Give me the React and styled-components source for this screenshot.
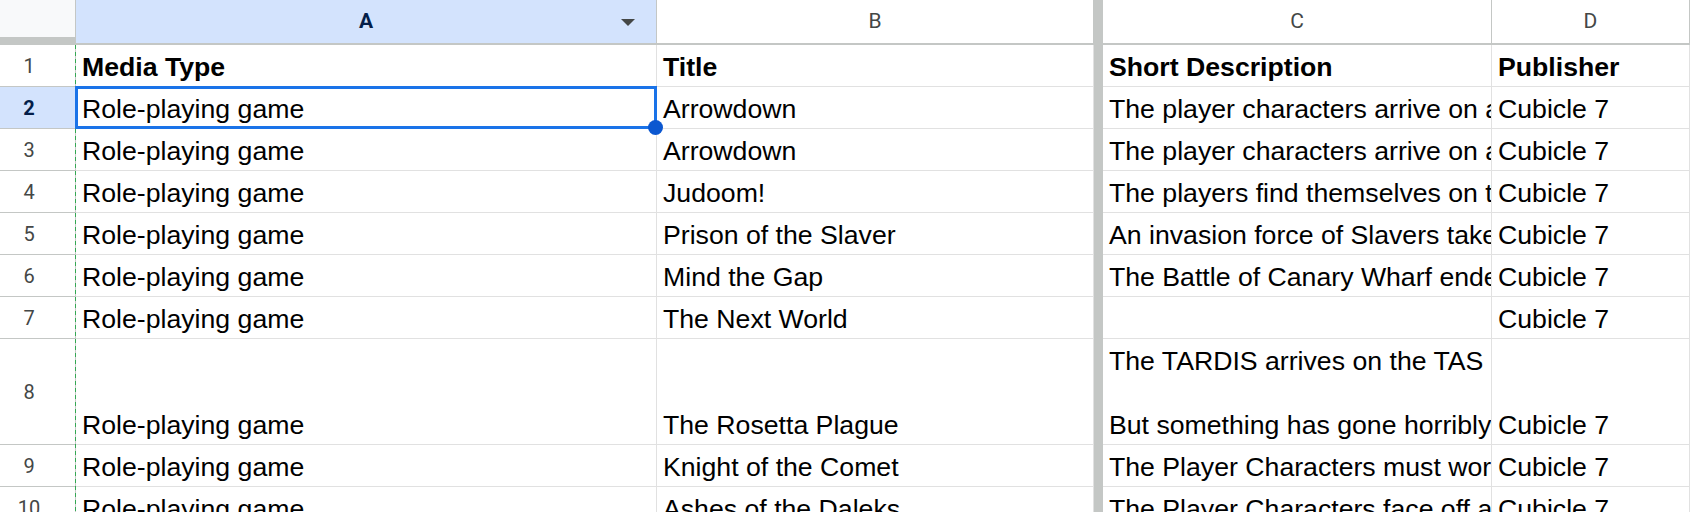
import React from "react";
import styled, { createGlobalStyle } from "styled-components";

const GlobalStyle = createGlobalStyle`
  html, body {
    margin: 0;
    padding: 0;
    background: #fff;
    overflow: hidden;
  }
  #root {
    width: 1690px;
    height: 512px;
    overflow: hidden;
  }
`;

const COLUMNS = "76px 581px 437px 9px 389px 198px";
const HEADER_LINE = "#c4c7c5";
const GRID_LINE = "#e1e1e1";
const SELECTED_BG = "#d3e3fd";
const SELECTED_INK = "#041e49";

const Sheet = styled.div`
  width: 1690px;
  font-family: "Liberation Sans", Arial, sans-serif;
  color: #000;
`;

const HeaderRow = styled.div`
  display: grid;
  grid-template-columns: ${COLUMNS};
  height: 45px;
`;

const Corner = styled.div`
  box-sizing: border-box;
  background: #f8f9fa;
  border-right: 1px solid ${HEADER_LINE};
  border-bottom: 8px solid ${HEADER_LINE};
`;

const ColHeader = styled.div`
  position: relative;
  box-sizing: border-box;
  display: flex;
  align-items: center;
  justify-content: center;
  padding-bottom: 1px;
  border-right: 1px solid ${HEADER_LINE};
  border-bottom: 2px solid ${HEADER_LINE};
  background: ${(p) => (p.$selected ? SELECTED_BG : "#fff")};
  color: ${(p) => (p.$selected ? SELECTED_INK : "#444746")};
  font-family: Roboto, "Liberation Sans", sans-serif;
  font-size: 21px;
  font-weight: ${(p) => (p.$selected ? 700 : 400)};
`;

const MenuArrow = styled.span`
  position: absolute;
  right: 21px;
  top: 19px;
  width: 0;
  height: 0;
  border-left: 7px solid transparent;
  border-right: 7px solid transparent;
  border-top: 7px solid #444746;
`;

const FreezeBar = styled.div`
  background: ${HEADER_LINE};
`;

const Body = styled.div`
  position: relative;

  &::after {
    content: "";
    position: absolute;
    left: 75px;
    top: 0;
    bottom: 0;
    width: 1px;
    background: repeating-linear-gradient(
      to bottom,
      #34a853 0 4px,
      transparent 4px 7px
    );
    pointer-events: none;
    z-index: 3;
  }
`;

const Row = styled.div`
  display: grid;
  grid-template-columns: ${COLUMNS};
  height: ${(p) => p.$height}px;
`;

const RowHeader = styled.div`
  box-sizing: border-box;
  display: flex;
  align-items: center;
  justify-content: center;
  padding-right: 17px;
  border-right: 1px solid ${HEADER_LINE};
  border-bottom: 1px solid ${HEADER_LINE};
  background: ${(p) => (p.$selected ? SELECTED_BG : "#fff")};
  color: ${(p) => (p.$selected ? SELECTED_INK : "#444746")};
  font-family: Roboto, "Liberation Sans", sans-serif;
  font-size: 20px;
  font-weight: ${(p) => (p.$selected ? 700 : 400)};
`;

const Cell = styled.div`
  position: relative;
  box-sizing: border-box;
  display: flex;
  flex-direction: column;
  justify-content: flex-end;
  min-width: 0;
  border-right: 1px solid ${GRID_LINE};
  border-bottom: 1px solid ${GRID_LINE};
`;

const CellText = styled.div`
  padding: 0 0 3px 6px;
  overflow: hidden;
  white-space: pre;
  font-size: 26.67px;
  line-height: 32px;
  font-weight: ${(p) => (p.$bold ? 700 : 400)};
`;

const Selection = styled.div`
  position: absolute;
  inset: -1px;
  border: 3px solid #1a73e8;
  pointer-events: none;
  z-index: 4;
`;

const FillHandle = styled.span`
  position: absolute;
  right: -9px;
  bottom: -9px;
  width: 15px;
  height: 15px;
  border-radius: 50%;
  background: #0b57d0;
`;

const rows = [
  {
    n: 1,
    bold: true,
    a: "Media Type",
    b: "Title",
    c: "Short Description",
    d: "Publisher",
  },
  {
    n: 2,
    active: true,
    a: "Role-playing game",
    b: "Arrowdown",
    c: "The player characters arrive on a remote world at the edge of the galaxy.",
    d: "Cubicle 7",
  },
  {
    n: 3,
    a: "Role-playing game",
    b: "Arrowdown",
    c: "The player characters arrive on a remote world at the edge of the galaxy.",
    d: "Cubicle 7",
  },
  {
    n: 4,
    a: "Role-playing game",
    b: "Judoom!",
    c: "The players find themselves on the Judoon homeworld.",
    d: "Cubicle 7",
  },
  {
    n: 5,
    a: "Role-playing game",
    b: "Prison of the Slaver",
    c: "An invasion force of Slavers takes over the colony.",
    d: "Cubicle 7",
  },
  {
    n: 6,
    a: "Role-playing game",
    b: "Mind the Gap",
    c: "The Battle of Canary Wharf ended with the Void sealed.",
    d: "Cubicle 7",
  },
  {
    n: 7,
    a: "Role-playing game",
    b: "The Next World",
    c: "",
    d: "Cubicle 7",
  },
  {
    n: 8,
    height: 106,
    a: "Role-playing game",
    b: "The Rosetta Plague",
    c: "The TARDIS arrives on the TAS Rosetta.\n\nBut something has gone horribly wrong on board.",
    d: "Cubicle 7",
  },
  {
    n: 9,
    a: "Role-playing game",
    b: "Knight of the Comet",
    c: "The Player Characters must work together to stop the comet.",
    d: "Cubicle 7",
  },
  {
    n: 10,
    a: "Role-playing game",
    b: "Ashes of the Daleks",
    c: "The Player Characters face off against the Daleks.",
    d: "Cubicle 7",
  },
];

const App = () => {
  return (
    <>
      <GlobalStyle />
      <Sheet>
        <HeaderRow>
          <Corner />
          <ColHeader $selected>
            A
            <MenuArrow />
          </ColHeader>
          <ColHeader>B</ColHeader>
          <FreezeBar />
          <ColHeader>C</ColHeader>
          <ColHeader>D</ColHeader>
        </HeaderRow>
        <Body>
          {rows.map((row) => (
            <Row key={row.n} $height={row.height || 42}>
              <RowHeader $selected={row.active}>{row.n}</RowHeader>
              <Cell>
                <CellText $bold={row.bold}>{row.a}</CellText>
                {row.active && (
                  <Selection>
                    <FillHandle />
                  </Selection>
                )}
              </Cell>
              <Cell>
                <CellText $bold={row.bold}>{row.b}</CellText>
              </Cell>
              <FreezeBar />
              <Cell>
                <CellText $bold={row.bold}>{row.c}</CellText>
              </Cell>
              <Cell>
                <CellText $bold={row.bold}>{row.d}</CellText>
              </Cell>
            </Row>
          ))}
        </Body>
      </Sheet>
    </>
  );
};

export default App;
